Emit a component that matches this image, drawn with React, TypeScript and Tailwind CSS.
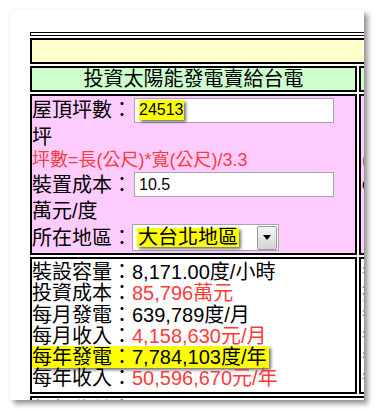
import * as React from 'react';

const results = [
    { label: '裝設容量：', value: '8,171.00度/小時', red: false, mark: false },
    { label: '投資成本：', value: '85,796萬元', red: true, mark: false },
    { label: '每月發電：', value: '639,789度/月', red: false, mark: false },
    { label: '每月收入：', value: '4,158,630元/月', red: true, mark: false },
    { label: '每年發電：', value: '7,784,103度/年', red: false, mark: true },
    { label: '每年收入：', value: '50,596,670元/年', red: true, mark: false },
];

function FakeInput({ value, mark }: { value: string; mark?: boolean }) {
    return (
        <div className="ml-[2px] flex h-[25px] w-[200px] items-center border border-[#a5a5a5] bg-white pl-[4px] text-[16px] text-black">
            <span className={mark ? 'bg-[#ffff00] leading-[20px] shadow-[2px_2px_3px_rgba(0,0,0,0.55)]' : 'leading-[20px]'}>
                {value}
            </span>
        </div>
    );
}

export default function App() {
    return (
        <div className="min-h-[411px] w-[375px] overflow-hidden bg-white pt-[10px] pl-[10px] font-['Liberation_Sans','Noto_Sans_CJK_TC',sans-serif] text-black">
            <div className="h-[390px] w-[354px] overflow-hidden bg-white pt-[22px] pl-[20px] shadow-[4px_4px_5px_rgba(0,0,0,0.4),0_0_2px_rgba(0,0,0,0.12)]">
                <div className="flex w-[380px] flex-col gap-[2px]">
                    {/* top empty strip */}
                    <div className="h-[4px] border-y border-l border-black" />
                    <div className="h-[26px] border-2 border-black bg-[#ffffcc]" />

                    {/* title */}
                    <div className="flex gap-[2px]">
                        <div className="flex h-[26px] w-[327px] items-center justify-center border-2 border-black bg-[#ccffcc] text-[20px] leading-[22px]">
                            投資太陽能發電賣給台電
                        </div>
                        <div className="h-[26px] flex-1 border-2 border-black bg-[#ccffcc]" />
                    </div>

                    {/* inputs */}
                    <div className="flex gap-[2px]">
                        <div className="h-[161px] w-[327px] border-2 border-black bg-[#ffccff] text-[20px] leading-[22px]">
                            <div className="flex h-[28px] items-center">
                                <span>屋頂坪數：</span>
                                <FakeInput value="24513" mark />
                            </div>
                            <div className="flex h-[25px] items-center">坪</div>
                            <div className="flex h-[21px] items-center text-[18px] text-[#ff3b3b]">
                                坪數=長(公尺)*寬(公尺)/3.3
                            </div>
                            <div className="flex h-[29px] items-center">
                                <span>裝置成本：</span>
                                <FakeInput value="10.5" />
                            </div>
                            <div className="flex h-[23px] items-center">萬元/度</div>
                            <div className="flex h-[31px] items-center">
                                <span>所在地區：</span>
                                <div className="flex h-[27px] w-[147px] items-center justify-between border border-[#a5a5a5] bg-white pr-[1px] pl-[4px]">
                                    <span className="bg-[#ffff00] px-[1px] text-[20px] leading-[19px] shadow-[2px_2px_3px_rgba(0,0,0,0.55)]">
                                        大台北地區
                                    </span>
                                    <div className="flex h-[24px] w-[20px] items-center justify-center rounded-[2px] border border-[#9a9a9a] bg-gradient-to-b from-[#f6f6f6] to-[#d4d4d4]">
                                        <svg width="8" height="5" viewBox="0 0 8 5">
                                            <path d="M0 0h8L4 5z" fill="#000" />
                                        </svg>
                                    </div>
                                </div>
                            </div>
                        </div>
                        <div className="h-[161px] flex-1 border-2 border-black bg-[#ffccff] pt-[52px] pl-[1px] text-[18px] leading-[24px] text-[#c04040]">
                            (公
                            <br />
                            <span className="text-black">c</span>
                        </div>
                    </div>

                    {/* results */}
                    <div className="flex gap-[2px]">
                        <div className="h-[137px] w-[327px] border-2 border-black bg-white pt-[3px] text-[20px] leading-[21.3px]">
                            {results.map(r => (
                                <div key={r.label}>
                                    <span className={r.mark ? 'bg-[#ffff00] pr-[2px] shadow-[2px_2px_3px_rgba(0,0,0,0.55)]' : ''}>
                                        {r.label}
                                        <span className={r.red ? 'text-[#ff3b3b]' : ''}>{r.value}</span>
                                    </span>
                                </div>
                            ))}
                        </div>
                        <div className="h-[137px] flex-1 border-2 border-black bg-white pt-[3px] pl-[1px] text-[20px] leading-[21.3px] text-[#b07030]">
                            {['每', '投', '每', '每', '每', '每'].map((c, i) => (
                                <div key={i}>{c}</div>
                            ))}
                        </div>
                    </div>

                    {/* next block, cut off */}
                    <div className="h-[60px] border-2 border-black bg-white pt-[1px] text-[20px] leading-[22px]">
                        每年收益率：
                    </div>
                </div>
            </div>
        </div>
    );
}
